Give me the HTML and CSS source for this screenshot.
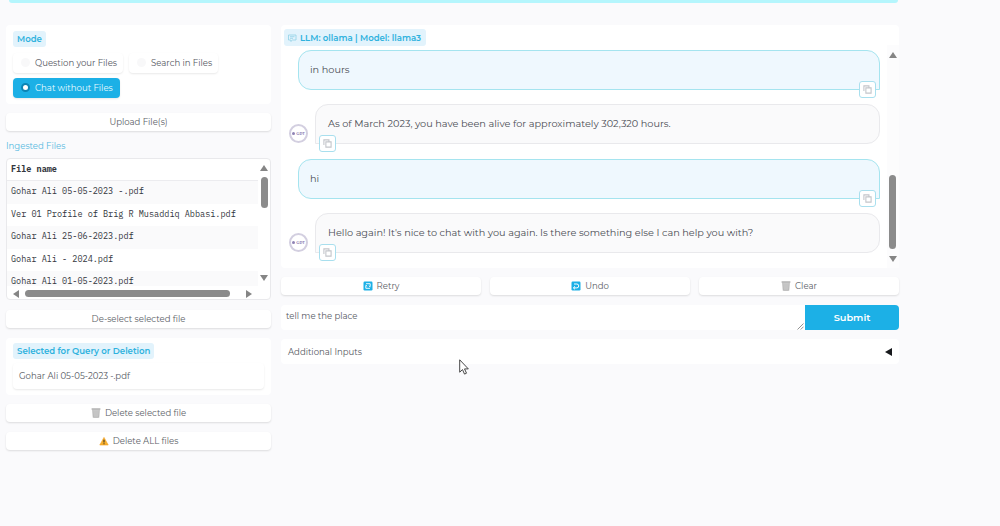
FILE: index.html
```
<!DOCTYPE html>
<html lang="en">
<head>
  <meta charset="UTF-8">
  <title>PrivateGPT</title>
  <link rel="stylesheet" href="styles.css">
</head>
<body>

  <svg width="0" height="0" class="defs">
    <symbol id="copy" viewBox="0 0 10 10">
      <path d="M3.2 3.2h5.800v5.800h-5.800z M1 6.600V1h5.600v2" fill="none" stroke="#c3c5ca" stroke-width="1.200"/>
    </symbol>
    <symbol id="trash" viewBox="0 0 10 10">
      <path d="M1 1.400h8L8.300 9.800H1.700z" fill="#d2d2d2"/>
      <path d="M.6 1h8.800" stroke="#8b8b8b" stroke-width="1"/>
      <path d="M2 2l.5 7.300h5L8 2M4 2.200v7M6 2.200v7" fill="none" stroke="#aaa" stroke-width=".6"/>
    </symbol>
  </svg>

  <div class="banner"></div>

  <div class="main">
    <div class="sidebar">
      <div class="card mode">
        <span class="label">Mode</span>
        <div class="options">
          <div class="option q"><i class="radio"></i><span>Question your Files</span></div>
          <div class="option s"><i class="radio"></i><span>Search in Files</span></div>
          <div class="option c selected"><i class="radio"></i><span>Chat without Files</span></div>
        </div>
      </div>

      <button class="btn upload">Upload File(s)</button>

      <div class="caption">Ingested Files</div>
      <div class="files">
        <div class="files-top">
          <div class="rows">
            <div class="row head">File name</div>
            <div class="row odd">Gohar Ali 05-05-2023 -.pdf</div>
            <div class="row">Ver 01 Profile of Brig R Musaddiq Abbasi.pdf</div>
            <div class="row odd">Gohar Ali 25-06-2023.pdf</div>
            <div class="row">Gohar Ali - 2024.pdf</div>
            <div class="row odd">Gohar Ali 01-05-2023.pdf</div>
          </div>
          <div class="vbar">
            <i class="arrow up"></i>
            <i class="thumb"></i>
            <i class="arrow down"></i>
          </div>
        </div>
        <div class="hbar">
          <i class="arrow left"></i>
          <i class="thumb"></i>
          <i class="arrow right"></i>
        </div>
      </div>

      <button class="btn deselect">De-select selected file</button>

      <div class="card selection">
        <span class="label">Selected for Query or Deletion</span>
        <div class="textbox">Gohar Ali 05-05-2023 -.pdf</div>
      </div>

      <button class="btn delete"><svg class="icon"><use href="#trash"/></svg><span>Delete selected file</span></button>
      <button class="btn delete-all">
        <svg class="icon" viewBox="0 0 10 10"><path d="M5 1.400L9.200 9H.8z" fill="#f8b02c" stroke="#f0a020" stroke-width=".6" stroke-linejoin="round"/><path d="M5 3.800v2.700M5 7.200v1.100" stroke="#3b3020" stroke-width="1.100"/></svg>
        <span>Delete ALL files</span>
      </button>
    </div>

    <div class="content">
      <div class="chat">
        <span class="label chat-label">
          <svg class="chat-icon" viewBox="0 0 9 8"><path d="M.5 1h7.500v5H4.500L2.800 7.500V6H.5zM2 2.700h4.500M2 4.300h3" fill="none" stroke="#8fd0e6" stroke-width=".8"/></svg>
          <span>LLM: ollama | Model: llama3</span>
        </span>
        <div class="messages">
          <div class="bubble user"><span>in hours</span><i class="copy"><svg><use href="#copy"/></svg></i></div>
          <div class="bot-row">
            <div class="avatar"><i></i><span>GPT</span></div>
            <div class="bubble bot"><span>As of March 2023, you have been alive for approximately 302,320 hours.</span><i class="copy"><svg><use href="#copy"/></svg></i></div>
          </div>
          <div class="bubble user"><span>hi</span><i class="copy"><svg><use href="#copy"/></svg></i></div>
          <div class="bot-row">
            <div class="avatar"><i></i><span>GPT</span></div>
            <div class="bubble bot"><span>Hello again! It's nice to chat with you again. Is there something else I can help you with?</span><i class="copy"><svg><use href="#copy"/></svg></i></div>
          </div>
        </div>
        <div class="chat-bar">
          <i class="arrow up"></i>
          <i class="thumb"></i>
          <i class="arrow down"></i>
        </div>
      </div>

      <div class="actions">
        <button class="btn"><svg class="icon" viewBox="0 0 10 10"><rect x=".5" y=".5" width="9" height="9" rx="1.200" fill="#1cb0e6"/><path d="M3 2.700h4.200v3M7 7.300H2.800v-3M5.800 4.700l1.400 1.300M4.200 5.300L2.800 4" fill="none" stroke="#fff" stroke-width=".9"/></svg><span>Retry</span></button>
        <button class="btn"><svg class="icon" viewBox="0 0 10 10"><rect x=".5" y=".5" width="9" height="9" rx="1.200" fill="#1cb0e6"/><path d="M3 3h2.800a1.900 1.900 0 0 1 0 3.900H2.500M4 5.300L2.400 6.900 4 8.300" fill="none" stroke="#fff" stroke-width="1"/></svg><span>Undo</span></button>
        <button class="btn"><svg class="icon"><use href="#trash"/></svg><span>Clear</span></button>
      </div>

      <div class="prompt">
        <div class="input">tell me the place
          <svg class="grip" viewBox="0 0 7 7"><path d="M.5 6.500l6-6M3.700 6.500l2.800-2.800" stroke="#777" stroke-width=".8"/></svg>
        </div>
        <button class="submit">Submit</button>
      </div>

      <div class="accordion"><span>Additional Inputs</span><i></i></div>
    </div>
  </div>

  <svg class="cursor" viewBox="0 0 10 16"><path d="M.7.800v12.400l2.800-2.600 2 4.500 2-.9-2-4.300h3.800z" fill="#fff" stroke="#333" stroke-width=".9"/></svg>

</body>
</html>
```
FILE: styles.css
```
* {
  box-sizing: border-box;
}
body {
  margin: 0;
  height: 526px;
  overflow: hidden;
  background: #fafafc;
  color: #55585f;
  font-family: Montserrat, Inter, sans-serif;
  font-size: 8.55px;
  line-height: 12px;
}
.defs {
  position: absolute;
}
.banner {
  width: 889px;
  height: 3px;
  margin-left: 9px;
  background: #b5f6fd;
  border-radius: 0 0 5px 5px;
}
.main {
  display: flex;
  gap: 10px;
  padding: 22px 101px 0 6px;
}
.sidebar {
  width: 265px;
  display: flex;
  flex-direction: column;
}
.content {
  flex: 1;
  min-width: 0;
}
.card {
  background: #fff;
  border-radius: 4px;
  padding: 6px 7px;
}
.label {
  display: inline-flex;
  align-items: center;
  height: 16px;
  padding: 0 4px;
  background: #e2f3fc;
  border-radius: 3px;
  color: #2fb2de;
  font-weight: 600;
  white-space: nowrap;
}
.mode {
  height: 79px;
}
.mode .label, .selection .label {
  display: flex;
  width: max-content;
}
.options {
  display: flex;
  flex-wrap: wrap;
  gap: 5px 6px;
  margin-top: 6px;
}
.option {
  display: flex;
  align-items: center;
  gap: 5px;
  height: 20px;
  padding: 0 0 1px 8px;
  background: #fff;
  border-radius: 4px;
  box-shadow: 0 1px 2px rgba(0, 0, 0, 0.09);
  white-space: nowrap;
}
.q { width: 110px; }
.s { width: 89px; }
.c { width: 107px; }
.radio {
  width: 9px;
  height: 9px;
  border-radius: 50%;
  background: #f8f8f9;
}
.selected {
  background: #1cb0e6;
  color: #e8fbff;
}
.selected .radio {
  background: #fff;
  border: 2.5px solid #0c84b4;
}
.btn {
  display: flex;
  align-items: center;
  justify-content: center;
  gap: 4px;
  height: 18px;
  padding: 0;
  border: none;
  border-radius: 4px;
  background: #fff;
  color: #5b5e66;
  box-shadow: 0 1px 2px rgba(0, 0, 0, 0.12);
  font: inherit;
}
.icon {
  width: 10px;
  height: 10px;
}
.upload { margin-top: 9px; }
.caption {
  margin: 9px 0 6px;
  color: #55b9e0;
}
.files {
  height: 142px;
  border: 1px solid #e9e9ec;
  border-radius: 4px;
  background: #fff;
  overflow: hidden;
  font-family: "IBM Plex Mono", "Liberation Mono", monospace;
  font-size: 8.52px;
  color: #33363d;
}
.files-top {
  display: flex;
  height: 127px;
}
.rows {
  flex: 1;
  overflow: hidden;
}
.row {
  height: 22.5px;
  padding-left: 4px;
  line-height: 20px;
  white-space: pre;
}
.head {
  height: 22px;
  border-bottom: 1px solid #ececef;
  font-weight: bold;
}
.odd { background: #fafafb; }
.vbar {
  width: 12px;
  display: flex;
  flex-direction: column;
  align-items: center;
  padding: 6px 0 5px;
}
.vbar .thumb {
  width: 7px;
  height: 31px;
  margin: 6px 0 auto;
}
.hbar {
  display: flex;
  align-items: center;
  padding: 0 18px 0 6px;
  height: 15px;
}
.hbar .thumb {
  width: 205px;
  height: 7px;
  margin: 0 auto 0 6px;
}
.thumb {
  border-radius: 4px;
  background: #8b8b8b;
}
.arrow {
  width: 0;
  height: 0;
  border: 4px solid transparent;
}
.up {
  border-top: 0;
  border-bottom: 6px solid #858585;
}
.down {
  border-bottom: 0;
  border-top: 6px solid #858585;
}
.left {
  border-left: 0;
  border-right: 6px solid #858585;
}
.right {
  border-right: 0;
  border-left: 6px solid #858585;
}
.deselect { margin-top: 10px; }
.selection {
  height: 57px;
  margin-top: 10px;
  padding-top: 5px;
}
.textbox {
  height: 26px;
  margin-top: 4px;
  padding: 7px 6px;
  border-radius: 4px;
  box-shadow: 0 1px 2px rgba(0, 0, 0, 0.09);
}
.delete { margin-top: 9px; }
.delete-all { margin-top: 10px; }

.chat {
  display: grid;
  grid-template: 20px 1fr / 1fr 12px;
  height: 243px;
  background: #fff;
  border-radius: 4px;
}
.chat-label {
  grid-column: 1 / 3;
  width: 142px;
  height: 17px;
  margin: 4px 0 0 3px;
  gap: 3px;
}
.chat-icon {
  flex: none;
  width: 9px;
  height: 8px;
}
.messages {
  display: flex;
  flex-direction: column;
  gap: 14.3px;
  padding: 5px 7px 0 8px;
  font-size: 9.72px;
}
.bubble {
  position: relative;
  height: 40px;
  border: 1px solid #e9e9ec;
  border-radius: 13px;
  padding: 13px 12px;
  background: #fafafb;
  color: #4a4d54;
  white-space: nowrap;
}
.user {
  margin-left: 9px;
  padding-left: 11px;
  border-color: #a5e4ef;
  border-bottom-right-radius: 0;
  background: #eff8fe;
}
.bot {
  flex: 1;
  border-bottom-left-radius: 0;
}
.bot-row {
  display: flex;
  align-items: flex-end;
  gap: 7px;
}
.avatar {
  display: flex;
  align-items: center;
  justify-content: center;
  gap: 1px;
  width: 19px;
  height: 19px;
  margin-bottom: 1px;
  border: 2px solid #d3cfe0;
  border-radius: 50%;
  background: #fff;
  color: #8f83b5;
  font-size: 4px;
  font-weight: 700;
  line-height: 5px;
}
.avatar i {
  width: 3px;
  height: 3px;
  border-radius: 50%;
  background: #8f83b5;
}
.copy {
  position: absolute;
  bottom: -9px;
  left: 3px;
  display: flex;
  align-items: center;
  justify-content: center;
  width: 17px;
  height: 17px;
  border: 1px solid #a9dfee;
  border-radius: 3px;
  background: #fff;
}
.user .copy {
  left: auto;
  right: 3px;
}
.copy svg {
  width: 9px;
  height: 9px;
}
.chat-bar {
  display: flex;
  flex-direction: column;
  align-items: center;
  padding: 7px 1px 6px 0;
  background: #fcfcfd;
}
.chat-bar .thumb {
  width: 7px;
  height: 74px;
  margin: auto 0 7px;
}

.actions {
  display: grid;
  grid-template-columns: repeat(3, 1fr);
  gap: 9px;
  margin: 9px 0 10px;
}
.prompt {
  display: flex;
  height: 25px;
}
.input {
  flex: 1;
  position: relative;
  padding: 5px;
  background: #fff;
  border-radius: 4px 0 0 4px;
}
.grip {
  position: absolute;
  right: 1px;
  bottom: 0;
  width: 7px;
  height: 7px;
}
.submit {
  width: 94px;
  border: none;
  border-radius: 0 4px 4px 0;
  background: #1cb0e6;
  color: #fff;
  font: inherit;
  font-size: 9.75px;
  font-weight: 600;
}
.accordion {
  display: flex;
  align-items: center;
  justify-content: space-between;
  height: 25px;
  margin-top: 9px;
  padding: 0 7px;
  background: #fff;
  border-radius: 4px;
}
.accordion i {
  border: 4px solid transparent;
  border-left: 0;
  border-right: 7px solid #17191c;
}
.cursor {
  position: absolute;
  left: 459px;
  top: 359px;
  width: 10px;
  height: 16px;
}
```
